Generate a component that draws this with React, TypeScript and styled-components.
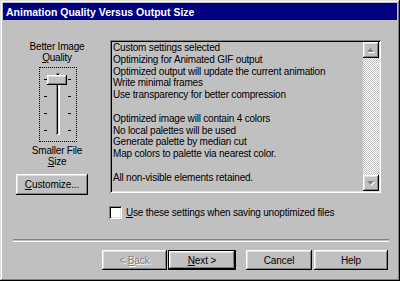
import { FC } from 'react';
import styled, { createGlobalStyle } from 'styled-components';

const GlobalStyle = createGlobalStyle`
  html, body {
    margin: 0;
    padding: 0;
    background: #c0c0c0;
  }
  body {
    font-family: "Liberation Sans", Arial, sans-serif;
    font-size: 10px;
    letter-spacing: -0.2px;
    color: #000;
  }
`;

const raised = `
  box-shadow: inset -1px -1px #000, inset 1px 1px #fff,
    inset -2px -2px #808080, inset 2px 2px #dfdfdf;
`;

const sunken = `
  box-shadow: inset 1px 1px #808080, inset -1px -1px #fff,
    inset 2px 2px #000, inset -2px -2px #dfdfdf;
`;

const Window = styled.div`
  box-sizing: border-box;
  width: 400px;
  height: 281px;
  padding: 3px;
  background: #c0c0c0;
  display: flex;
  flex-direction: column;
  box-shadow: inset -1px -1px #000, inset 1px 1px #dfdfdf,
    inset -2px -2px #808080, inset 2px 2px #fff;
`;

const TitleBar = styled.div`
  height: 17px;
  display: flex;
  align-items: center;
  padding-left: 3px;
  background: #000080;
  color: #fff;
  font-weight: bold;
  font-size: 10.5px;
  letter-spacing: 0;
`;

const Main = styled.div`
  display: grid;
  grid-template-columns: 100px 271px;
  column-gap: 5px;
  margin-top: 20px;
  padding-left: 2px;
`;

const LeftColumn = styled.div`
  display: flex;
  flex-direction: column;
  align-items: center;
  padding-top: 1px;
`;

const Label = styled.div`
  text-align: center;
  line-height: 11px;
  margin-left: 4px;
`;

const SliderFrame = styled.div`
  box-sizing: border-box;
  width: 38px;
  height: 75px;
  margin: 4px 0 3px 6px;
  border: 1px dotted #000;
  position: relative;
  display: flex;
  padding: 5px 0 0 4px;
`;

const Ticks = styled.div`
  display: flex;
  flex-direction: column;
  gap: 16px;
  margin-top: 6px;
  width: 3px;
`;

const Tick = styled.div`
  height: 1px;
  background: #000;
`;

const Track = styled.div`
  width: 4px;
  height: 62px;
  margin: 0 8px 0 9px;
  background: #c0c0c0;
  ${sunken}
`;

const Thumb = styled.div`
  position: absolute;
  left: 7px;
  top: 7px;
  width: 20px;
  height: 10px;
  background: #c0c0c0;
  ${raised}
`;

const Button = styled.button<{ $w: number; $default?: boolean }>`
  box-sizing: border-box;
  width: ${(p) => p.$w}px;
  height: 20px;
  padding: 0;
  border: 0;
  background: #c0c0c0;
  font-family: inherit;
  font-size: 10px;
  letter-spacing: -0.1px;
  color: #000;
  ${(p) =>
    p.$default
      ? `box-shadow: inset 0 0 0 1px #000, inset -2px -2px #000, inset 2px 2px #fff,
    inset -3px -3px #808080, inset 3px 3px #dfdfdf;`
      : raised}
  &:disabled {
    color: #808080;
    text-shadow: 1px 1px #fff;
  }
`;

const CustomizeButton = styled(Button)`
  height: 21px;
  margin-top: 7px;
  margin-right: 6px;
`;

const ListBox = styled.div`
  box-sizing: border-box;
  height: 153px;
  padding: 2px;
  display: flex;
  background: #c0c0c0;
  ${sunken}
`;

const ListText = styled.div`
  flex: 1;
  padding: 0 0 0 1px;
  line-height: 11.8px;
  white-space: nowrap;
  overflow: hidden;
`;

const Line = styled.div`
  height: 11.8px;
`;

const ScrollBar = styled.div`
  width: 16px;
  display: flex;
  flex-direction: column;
`;

const ScrollButton = styled.div`
  box-sizing: border-box;
  width: 16px;
  height: 16px;
  display: flex;
  align-items: center;
  justify-content: center;
  background: #c0c0c0;
  ${raised}
`;

const ScrollTrack = styled.div`
  flex: 1;
  background: repeating-conic-gradient(#c0c0c0 0 25%, #fff 0 50%) 0 0 / 2px 2px;
`;

const CheckRow = styled.label`
  grid-column: 2;
  display: flex;
  align-items: center;
  gap: 4px;
  margin: 11px 0 0 -1px;
  height: 13px;
`;

const CheckBox = styled.span`
  box-sizing: border-box;
  width: 13px;
  height: 13px;
  background: #fff;
  ${sunken}
`;

const Separator = styled.div`
  height: 1px;
  margin: 20px 8px 0 10px;
  border-top: 1px solid #808080;
  border-bottom: 1px solid #fff;
`;

const Footer = styled.div`
  display: flex;
  justify-content: flex-end;
  margin-top: 8px;
  padding-right: 9px;
`;

const Gap = styled.span<{ $w: number }>`
  width: ${(p) => p.$w}px;
`;

const Arrow: FC<{ down?: boolean }> = ({ down }) => (
  <svg width="8" height="5" viewBox="0 0 8 5">
    {down ? (
      <>
        <polygon points="1,1 8,1 4.5,5" fill="#fff" />
        <polygon points="0,0 7,0 3.5,4" fill="#808080" />
      </>
    ) : (
      <>
        <polygon points="4.5,1 8,5 1,5" fill="#fff" />
        <polygon points="3.5,0 7,4 0,4" fill="#808080" />
      </>
    )}
  </svg>
);

const lines = [
  'Custom settings selected',
  'Optimizing for Animated GIF output',
  'Optimized output will update the current animation',
  'Write minimal frames',
  'Use transparency for better compression',
  '',
  'Optimized image will contain 4 colors',
  'No local palettes will be used',
  'Generate palette by median cut',
  'Map colors to palette  via nearest color.',
  '',
  'All non-visible elements retained.',
];

const App: FC = () => (
  <>
    <GlobalStyle />
    <Window>
      <TitleBar>Animation Quality Versus Output Size</TitleBar>
      <Main>
        <LeftColumn>
          <Label>Better Image</Label>
          <Label>
            <u>Q</u>uality
          </Label>
          <SliderFrame>
            <Ticks>
              <Tick />
              <Tick />
              <Tick />
              <Tick />
            </Ticks>
            <Track />
            <Ticks>
              <Tick />
              <Tick />
              <Tick />
              <Tick />
            </Ticks>
            <Thumb />
          </SliderFrame>
          <Label>Smaller File</Label>
          <Label>
            <u>S</u>ize
          </Label>
          <CustomizeButton $w={72}>
            <u>C</u>ustomize...
          </CustomizeButton>
        </LeftColumn>
        <ListBox>
          <ListText>
            {lines.map((l, i) => (
              <Line key={i}>{l}</Line>
            ))}
          </ListText>
          <ScrollBar>
            <ScrollButton>
              <Arrow />
            </ScrollButton>
            <ScrollTrack />
            <ScrollButton>
              <Arrow down />
            </ScrollButton>
          </ScrollBar>
        </ListBox>
        <CheckRow>
          <CheckBox />
          <span>
            <u>U</u>se these settings when saving unoptimized files
          </span>
        </CheckRow>
      </Main>
      <Separator />
      <Footer>
        <Button $w={65} disabled>
          &lt; <u>B</u>ack
        </Button>
        <Gap $w={1} />
        <Button $w={68} $default>
          <u>N</u>ext &gt;
        </Button>
        <Gap $w={10} />
        <Button $w={66}>Cancel</Button>
        <Gap $w={2} />
        <Button $w={74}>Help</Button>
      </Footer>
    </Window>
  </>
);

export default App;
